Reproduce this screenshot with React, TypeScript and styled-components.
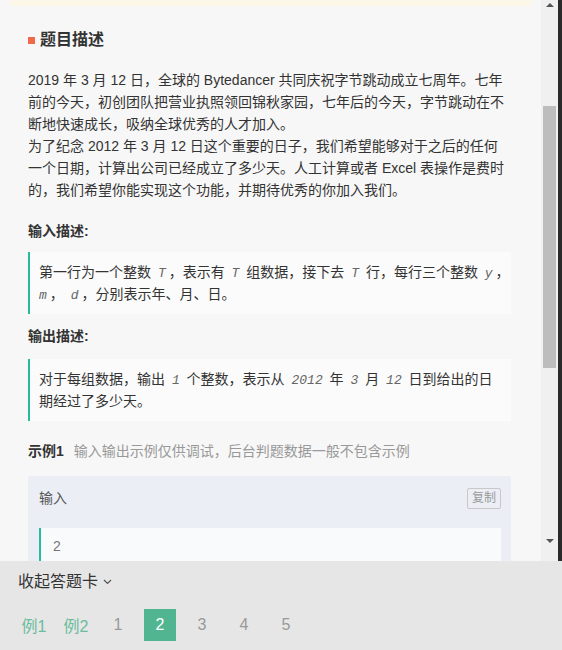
import React from "react"
import styled, { createGlobalStyle } from "styled-components"

const GlobalStyle = createGlobalStyle`
  html, body {
    margin: 0;
    padding: 0;
    background: #f7f7f7;
  }
  body {
    font-family: "Liberation Sans", "Noto Sans CJK SC", sans-serif;
  }
`

const Page = styled.div`
  width: 562px;
  height: 650px;
  display: flex;
  flex-direction: column;
  overflow: hidden;
`

const Viewport = styled.div`
  display: flex;
  height: 561px;
  flex-shrink: 0;
`

const Scroller = styled.div`
  flex: 1;
  overflow: hidden;
  background: #f7f7f7;
`

const Notice = styled.div`
  height: 6px;
  margin: 0 10px;
  background: #fdf7e7;
`

const Content = styled.div`
  padding: 22px 30px 0 28px;
  color: #333;
  font-size: 14px;
  line-height: 22px;
`

const Title = styled.h2`
  display: flex;
  align-items: center;
  gap: 5px;
  margin: 0;
  font-size: 16px;
  font-weight: bold;
  line-height: 24px;
  color: #333;

  &::before {
    content: "";
    width: 7px;
    height: 7px;
    background: #f0694a;
  }
`

const Paragraph = styled.p`
  margin: 17px 0 0;
  white-space: nowrap;
`

const SubTitle = styled.h3<{ $gap: number }>`
  margin: ${({ $gap }) => $gap}px 0 0;
  font-size: 14px;
  font-weight: bold;
  line-height: 22px;
`

const Quote = styled.blockquote<{ $gap: number }>`
  margin: ${({ $gap }) => $gap}px 0 0;
  padding: 9px 2px 9px 9px;
  border-left: 2px solid #25bb9b;
  background: #fbfbfb;
  white-space: nowrap;
`

const M = styled.span<{ $tight?: boolean }>`
  font-family: "Liberation Mono", monospace;
  font-style: italic;
  font-size: 13px;
  line-height: 1;
  color: #666;
  padding: 0 3px 0 ${({ $tight }) => ($tight ? 0 : 3)}px;
`

const ExampleHead = styled.div`
  margin-top: 19px;
  display: flex;
  align-items: center;
  gap: 10px;
  line-height: 22px;
`

const ExampleLabel = styled.span`
  font-weight: bold;
`

const ExampleHint = styled.span`
  color: #999;
`

const Sample = styled.div`
  margin-top: 14px;
  padding: 11px 10px 30px 11px;
  background: #ebeff5;
  border-radius: 3px;
`

const SampleHead = styled.div`
  display: flex;
  align-items: center;
  justify-content: space-between;
  height: 22px;
  color: #555;
`

const CopyButton = styled.button`
  height: 21px;
  padding: 0 4px;
  border: 1px solid #c8c8c8;
  border-radius: 2px;
  background: transparent;
  color: #999;
  font-family: inherit;
  font-size: 12px;
  line-height: 19px;
`

const Code = styled.pre`
  margin: 19px 0 0;
  padding: 7px 12px 20px;
  border-left: 2px solid #25bb9b;
  background: #f9fafc;
  font-family: "Liberation Sans", sans-serif;
  font-size: 14px;
  line-height: 22px;
  color: #777;
`

const ScrollBar = styled.div`
  width: 17px;
  display: flex;
  flex-direction: column;
  background: #f0f0f0;
  padding-bottom: 12px;
`

const Arrow = styled.div<{ $dir: "up" | "down"; $h: number }>`
  height: ${({ $h }) => $h}px;
  display: flex;
  align-items: center;
  justify-content: center;

  &::after {
    content: "";
    border-left: 4px solid transparent;
    border-right: 4px solid transparent;
    ${({ $dir }) =>
      $dir === "up" ? "border-bottom: 4px solid #555;" : "border-top: 4px solid #555;"}
  }
`

const Track = styled.div`
  flex: 1;
  padding: 96px 2px 0;
`

const Thumb = styled.div`
  height: 262px;
  background: #bdbdbd;
`

const DarkEdge = styled.div`
  width: 4px;
  background: #2a2a2a;
`

const Footer = styled.div`
  flex: 1;
  background: #e6e6e6;
  padding: 10px 0 0 18px;
`

const Toggle = styled.div`
  display: flex;
  align-items: center;
  gap: 5px;
  font-size: 16px;
  line-height: 22px;
  color: #333;
`

const Pager = styled.div`
  margin-top: 16px;
  display: flex;
  gap: 10px;
`

const PageItem = styled.span<{ $kind: "example" | "normal" | "active" }>`
  width: 32px;
  height: 32px;
  display: flex;
  align-items: center;
  justify-content: center;
  font-size: 16px;
  white-space: nowrap;
  color: ${({ $kind }) => ($kind === "example" ? "#6cbd9d" : $kind === "active" ? "#fff" : "#999")};
  background: ${({ $kind }) => ($kind === "active" ? "#52b592" : "transparent")};
`

const pages: { label: string; kind: "example" | "normal" | "active" }[] = [
  { label: "例1", kind: "example" },
  { label: "例2", kind: "example" },
  { label: "1", kind: "normal" },
  { label: "2", kind: "active" },
  { label: "3", kind: "normal" },
  { label: "4", kind: "normal" },
  { label: "5", kind: "normal" },
]

export default function App() {
  return (
    <Page>
      <GlobalStyle />
      <Viewport>
        <Scroller>
          <Notice />
          <Content>
            <Title>题目描述</Title>
            <Paragraph>
              2019 年 3 月 12 日，全球的 Bytedancer 共同庆祝字节跳动成立七周年。七年
              <br />
              前的今天，初创团队把营业执照领回锦秋家园，七年后的今天，字节跳动在不
              <br />
              断地快速成长，吸纳全球优秀的人才加入。
              <br />
              为了纪念 2012 年 3 月 12 日这个重要的日子，我们希望能够对于之后的任何
              <br />
              一个日期，计算出公司已经成立了多少天。人工计算或者 Excel 表操作是费时
              <br />
              的，我们希望你能实现这个功能，并期待优秀的你加入我们。
            </Paragraph>

            <SubTitle $gap={19}>输入描述:</SubTitle>
            <Quote $gap={10}>
              第一行为一个整数 <M>T</M>，表示有 <M>T</M> 组数据，接下去 <M>T</M> 行，每行三个整数 <M>y</M>，
              <br />
              <M $tight>m</M>， <M>d</M>，分别表示年、月、日。
            </Quote>

            <SubTitle $gap={11}>输出描述:</SubTitle>
            <Quote $gap={12}>
              对于每组数据，输出 <M>1</M> 个整数，表示从 <M>2012</M> 年 <M>3</M> 月 <M>12</M> 日到给出的日
              <br />
              期经过了多少天。
            </Quote>

            <ExampleHead>
              <ExampleLabel>示例1</ExampleLabel>
              <ExampleHint>输入输出示例仅供调试，后台判题数据一般不包含示例</ExampleHint>
            </ExampleHead>

            <Sample>
              <SampleHead>
                <span>输入</span>
                <CopyButton>复制</CopyButton>
              </SampleHead>
              <Code>2</Code>
            </Sample>
          </Content>
        </Scroller>
        <ScrollBar>
          <Arrow $dir="up" $h={10} />
          <Track>
            <Thumb />
          </Track>
          <Arrow $dir="down" $h={17} />
        </ScrollBar>
        <DarkEdge />
      </Viewport>
      <Footer>
        <Toggle>
          收起答题卡
          <svg width="9" height="6" viewBox="0 0 9 6">
            <polyline points="1,1 4.5,4.5 8,1" fill="none" stroke="#555" strokeWidth="1.2" />
          </svg>
        </Toggle>
        <Pager>
          {pages.map((p) => (
            <PageItem key={p.label} $kind={p.kind}>
              {p.label}
            </PageItem>
          ))}
        </Pager>
      </Footer>
    </Page>
  )
}
